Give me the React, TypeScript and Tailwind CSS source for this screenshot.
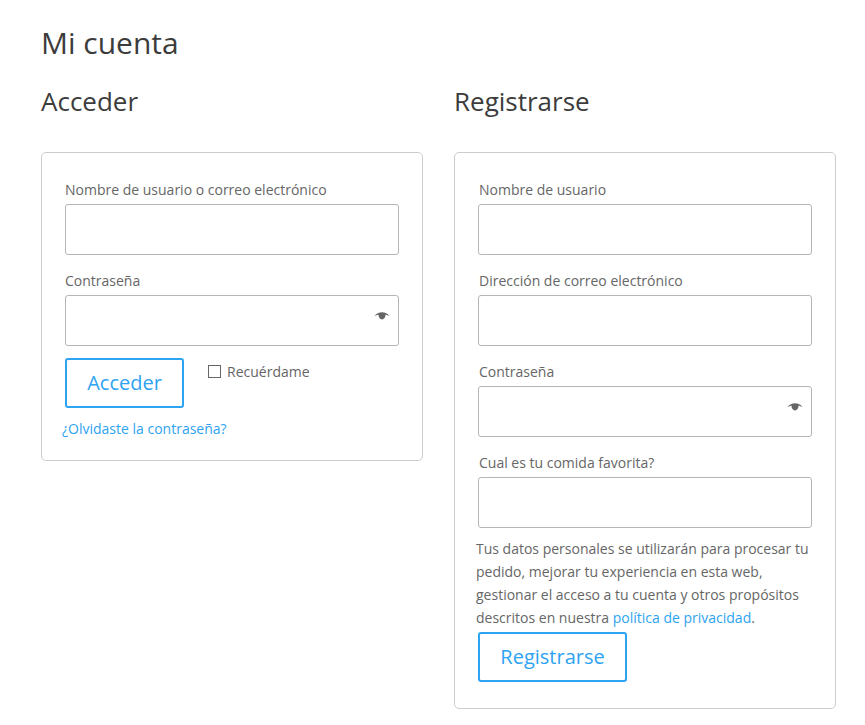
const font = "font-['Open_Sans',sans-serif]";

function Eye() {
  return (
    <svg width="16" height="10" viewBox="0 0 16 10" className="absolute right-[8px] top-[15px]">
      <path d="M0.5 5C2.5 2.4 5 1.2 8 1.2S13.5 2.4 15.5 5C13.5 4.2 12 3.8 11.5 3.8 11.5 6.5 10 8.5 8 8.5S4.5 6.5 4.5 3.8C4 3.8 2.5 4.2 0.5 5Z" fill="#666" />
    </svg>
  );
}

function Field({ label, eye, inset }: { label: string; eye?: boolean; inset?: boolean }) {
  return (
    <div className="flex flex-col">
      <label className={inset ? "pb-[2px] pl-px pt-[1px] text-[14px] leading-[24px] text-[#666]" : "pb-[2px] pt-[1px] text-[14px] leading-[24px] text-[#666]"}>{label}</label>
      <div className="relative h-[51px] rounded-[3px] border border-[#b5b5b5] bg-white">
        {eye ? <Eye /> : null}
      </div>
    </div>
  );
}

function Btn({ children, w }: { children: string; w: string }) {
  return (
    <button className={`h-[50px] ${w} rounded-[3px] border-2 border-[#2ea3f2] bg-white text-[20px] text-[#2ea3f2]`}>
      {children}
    </button>
  );
}

export default function App() {
  return (
    <div className={`${font} h-[725px] w-[865px] overflow-hidden bg-white pl-[41px] pt-[23px]`}>
      <h1 className="text-[30px] leading-[39px] text-[#3c3c3c]">Mi cuenta</h1>
      <div className="mt-[20px] flex gap-[32px]">
        <div className="w-[381px]">
          <h2 className="text-[26px] leading-[38px] text-[#3c3c3c]">Acceder</h2>
          <div className="mt-[32px] h-[309px] w-[382px] rounded-[5px] border border-[#ccc] px-[23px] pt-[24px]">
            <div className="flex flex-col gap-[13px]">
              <Field label="Nombre de usuario o correo electrónico" />
              <Field label="Contraseña" eye />
            </div>
            <div className="mt-[12px] flex items-start">
              <Btn w="w-[119px]">Acceder</Btn>
              <div className="ml-[24px] mt-[1px] flex items-center gap-[6px] text-[14px] leading-[24px] text-[#666]">
                <span className="h-[13px] w-[13px] border border-[#666] bg-white" />
                <span className="mt-[1px]">Recuérdame</span>
              </div>
            </div>
            <a className="-ml-[3px] mt-[9px] block text-[14px] leading-[24px] text-[#2ea3f2]">¿Olvidaste la contraseña?</a>
          </div>
        </div>
        <div className="w-[382px]">
          <h2 className="text-[26px] leading-[38px] text-[#3c3c3c]">Registrarse</h2>
          <div className="mt-[32px] h-[557px] rounded-[5px] border border-[#ccc] px-[23px] pt-[24px]">
            <div className="flex flex-col gap-[13px]">
              <Field label="Nombre de usuario" inset />
              <Field label="Dirección de correo electrónico" inset />
              <Field label="Contraseña" eye inset />
              <Field label="Cual es tu comida favorita?" inset />
            </div>
            <p className="-ml-[2px] -mr-[10px] mt-[9px] text-[14px] leading-[23px] text-[#666]">
              Tus datos personales se utilizarán para procesar tu pedido, mejorar tu experiencia en esta web, gestionar el acceso a tu cuenta y otros propósitos descritos en nuestra <a className="text-[#2ea3f2]">política de privacidad</a>.
            </p>
            <div className="mt-[3px]"><Btn w="w-[149px]">Registrarse</Btn></div>
          </div>
        </div>
      </div>
    </div>
  );
}
